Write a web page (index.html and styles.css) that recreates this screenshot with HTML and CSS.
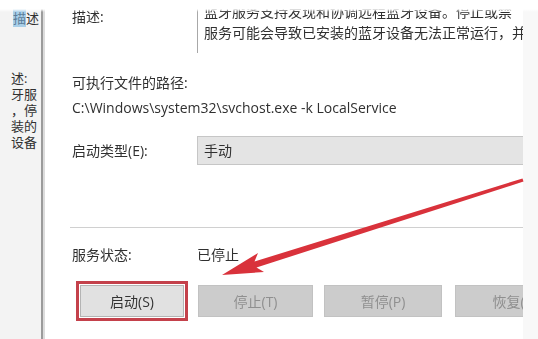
FILE: index.html
```html
<!DOCTYPE html>
<html lang="zh-CN">
<head>
    <meta charset="UTF-8">
    <meta name="viewport" content="width=device-width, initial-scale=1.0">
    <title>蓝牙支持服务 属性</title>
    <link rel="stylesheet" href="styles.css">
</head>
<body>
    <div class="screen">
        <div class="side">
            <div class="side-top"><span class="sel">描</span>述</div>
            <div class="side-text">
                <div>述:</div>
                <div>牙服</div>
                <div>，停</div>
                <div>装的</div>
                <div>设备</div>
            </div>
        </div>

        <div class="main">
            <div class="row desc-row">
                <div class="label desc-label">描述:</div>
                <div class="desc-box">
                    <div>蓝牙服务支持发现和协调远程蓝牙设备。停止或禁</div>
                    <div>服务可能会导致已安装的蓝牙设备无法正常运行，并</div>
                </div>
            </div>

            <div class="label path-label">可执行文件的路径:</div>
            <div class="path">C:\Windows\system32\svchost.exe -k LocalService</div>

            <div class="row start-row">
                <div class="label">启动类型(E):</div>
                <div class="combo">手动</div>
            </div>

            <div class="separator"></div>

            <div class="row status-row">
                <div class="label">服务状态:</div>
                <div>已停止</div>
            </div>

            <div class="buttons">
                <button class="btn btn-start">启动(S)</button>
                <button class="btn btn-stop" disabled>停止(T)</button>
                <button class="btn btn-pause" disabled>暂停(P)</button>
                <button class="btn btn-resume" disabled>恢复(R)</button>
            </div>
        </div>

        <div class="edge"></div>

        <!-- white strip left by the crop at the top of the shot -->
        <div class="top-fade"></div>

        <svg class="arrow" width="538" height="339" viewBox="0 0 538 339">
            <polygon points="222,275 258,253 254.5,261.5 522.5,178.5 523.5,181.5 256.5,267.5 264,272" fill="#d9323b"/>
        </svg>
    </div>
</body>
</html>
```

FILE: styles.css
```css
body {
    margin: 0;
    background-color: #fff;
    font-family: "Open Sans", "Noto Sans CJK SC", sans-serif;
    font-size: 14px;
    color: #303030;
}
.screen {
    position: relative;
    width: 538px;
    height: 339px;
    display: flex;
    overflow: hidden;
}
.side {
    width: 41px;
    flex-shrink: 0;
    background-color: #f3f3f3;
    border-right: 2px solid #9b9b9b;
    box-shadow: 2px 0 0 #dcdcdc;
    overflow: hidden;
    white-space: nowrap;
    font-size: 13px;
}
.side-top {
    margin-top: 10px;
    padding-left: 13px;
    line-height: 16px;
}
.sel {
    background-color: #a9cfe8;
    color: #5b7d99;
}
.side-text {
    margin-top: 44px;
    padding-left: 11px;
    line-height: 16px;
}
.main {
    width: 451px;
    flex-shrink: 0;
    margin-left: 2px;
    padding-left: 27px;
    overflow: hidden;
    white-space: nowrap;
    filter: blur(0.3px);
}
.row {
    display: grid;
    grid-template-columns: 125px 400px;
    align-items: center;
    line-height: 20px;
}
.desc-row {
    align-items: start;
    margin-top: -14px;
}
.desc-label {
    padding-top: 21px;
}
.desc-box {
    height: 67px;
    box-sizing: border-box;
    border-left: 1px solid #a8a8a8;
    padding: 15px 0 0 6px;
    line-height: 21px;
    overflow: hidden;
}
.path-label {
    margin-top: 20px;
    line-height: 20px;
}
.path {
    margin-top: 5px;
    line-height: 20px;
}
.start-row {
    margin-top: 18px;
}
.combo {
    height: 29px;
    box-sizing: border-box;
    background-color: #e4e4e4;
    border: 1px solid #c6c6c6;
    padding-left: 6px;
    line-height: 27px;
}
.separator {
    height: 1px;
    background-color: #d0d0d0;
    margin-top: 62px;
    margin-left: -2px;
}
.status-row {
    margin-top: 17px;
}
.buttons {
    display: flex;
    margin-top: 20px;
    padding-left: 8px;
}
.btn {
    height: 32px;
    font: inherit;
    color: #8f8f8f;
    background-color: #cccccc;
    border: 1px solid #c2c2c2;
    flex-shrink: 0;
}
.btn-start {
    width: 104px;
    color: #333;
    background-color: #e1e1e1;
    border-color: #b4b4b4;
    outline: 3px solid #c4414b;
    outline-offset: 1px;
}
.btn-stop {
    width: 115px;
    margin-left: 14px;
}
.btn-pause {
    width: 118px;
    margin-left: 11px;
}
.btn-resume {
    width: 120px;
    margin-left: 13px;
}
.edge {
    flex: 1;
    background-color: #f8f8f8;
}
.top-fade {
    position: absolute;
    left: 0;
    top: 0;
    width: 538px;
    height: 12px;
    background: linear-gradient(#fff 75%, rgba(255, 255, 255, 0));
}
.arrow {
    position: absolute;
    left: 0;
    top: 0;
    filter: blur(0.5px);
}
```
